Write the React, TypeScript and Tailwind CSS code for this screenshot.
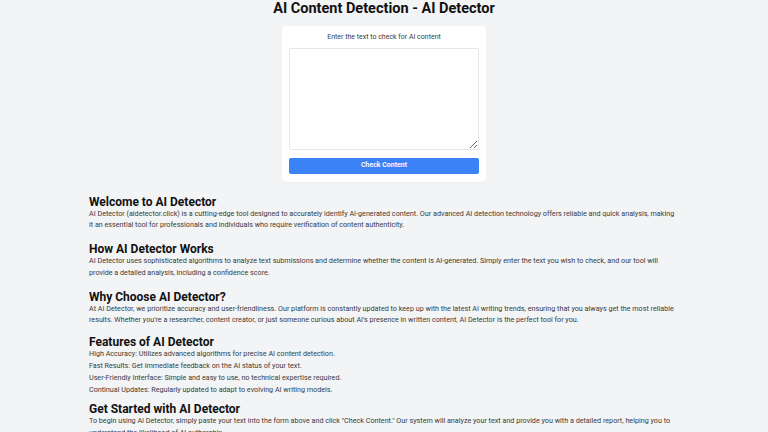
import React from "react";

const sections: { title: string; lines: string[]; mt: string }[] = [
  {
    title: "Welcome to AI Detector",
    mt: "",
    lines: [
      "AI Detector (aidetector.click) is a cutting-edge tool designed to accurately identify AI-generated content. Our advanced AI detection technology offers reliable and quick analysis, making it an essential tool for professionals and individuals who require verification of content authenticity.",
    ],
  },
  {
    title: "How AI Detector Works",
    mt: "mt-[12px]",
    lines: [
      "AI Detector uses sophisticated algorithms to analyze text submissions and determine whether the content is AI-generated. Simply enter the text you wish to check, and our tool will provide a detailed analysis, including a confidence score.",
    ],
  },
  {
    title: "Why Choose AI Detector?",
    mt: "mt-[12px]",
    lines: [
      "At AI Detector, we prioritize accuracy and user-friendliness. Our platform is constantly updated to keep up with the latest AI writing trends, ensuring that you always get the most reliable results. Whether you're a researcher, content creator, or just someone curious about AI's presence in written content, AI Detector is the perfect tool for you.",
    ],
  },
  {
    title: "Features of AI Detector",
    mt: "mt-[10.5px]",
    lines: [
      "High Accuracy: Utilizes advanced algorithms for precise AI content detection.",
      "Fast Results: Get immediate feedback on the AI status of your text.",
      "User-Friendly Interface: Simple and easy to use, no technical expertise required.",
      "Continual Updates: Regularly updated to adapt to evolving AI writing models.",
    ],
  },
  {
    title: "Get Started with AI Detector",
    mt: "mt-[8px]",
    lines: [
      'To begin using AI Detector, simply paste your text into the form above and click "Check Content." Our system will analyze your text and provide you with a detailed report, helping you to understand the likelihood of AI authorship.',
    ],
  },
];

export default function App() {
  return (
    <div
      className="min-h-[432px] w-full bg-[#f3f4f6] text-[#3a3a3a]"
      style={{ fontFamily: "Roboto, 'Liberation Sans', sans-serif" }}
    >
      <h1 className="text-center text-[14.5px] font-bold leading-[17px] text-[#111111]">
        AI Content Detection - AI Detector
      </h1>
      <div className="mx-auto mt-[9px] flex w-[204px] flex-col rounded-[4px] bg-white px-[7px] pb-[8px] pt-[6px] shadow-[0_1px_2px_rgba(0,0,0,0.04)]">
        <p className="text-center text-[7px] leading-[11.7px] text-[#3a3a3a]">
          Enter the text to check for AI content
        </p>
        <textarea className="mt-[4px] h-[102px] w-full resize-y rounded-[2px] border border-[#e5e7eb] bg-white outline-none" />
        <button className="mt-[8px] h-[16px] w-full rounded-[2px] bg-[#3b82f6] text-[7px] font-semibold text-white">
          Check Content
        </button>
      </div>
      <div className="mx-auto mt-[14px] w-[590px] pb-[20px]">
        {sections.map((s, i) => (
          <section key={i} className={s.mt}>
            <h2 className="text-[12px] font-bold leading-[12px] text-[#111111]">{s.title}</h2>
            {s.lines.map((l, j) => (
              <p key={j} className="text-[7.2px] leading-[11.7px]">
                {l}
              </p>
            ))}
          </section>
        ))}
      </div>
    </div>
  );
}
